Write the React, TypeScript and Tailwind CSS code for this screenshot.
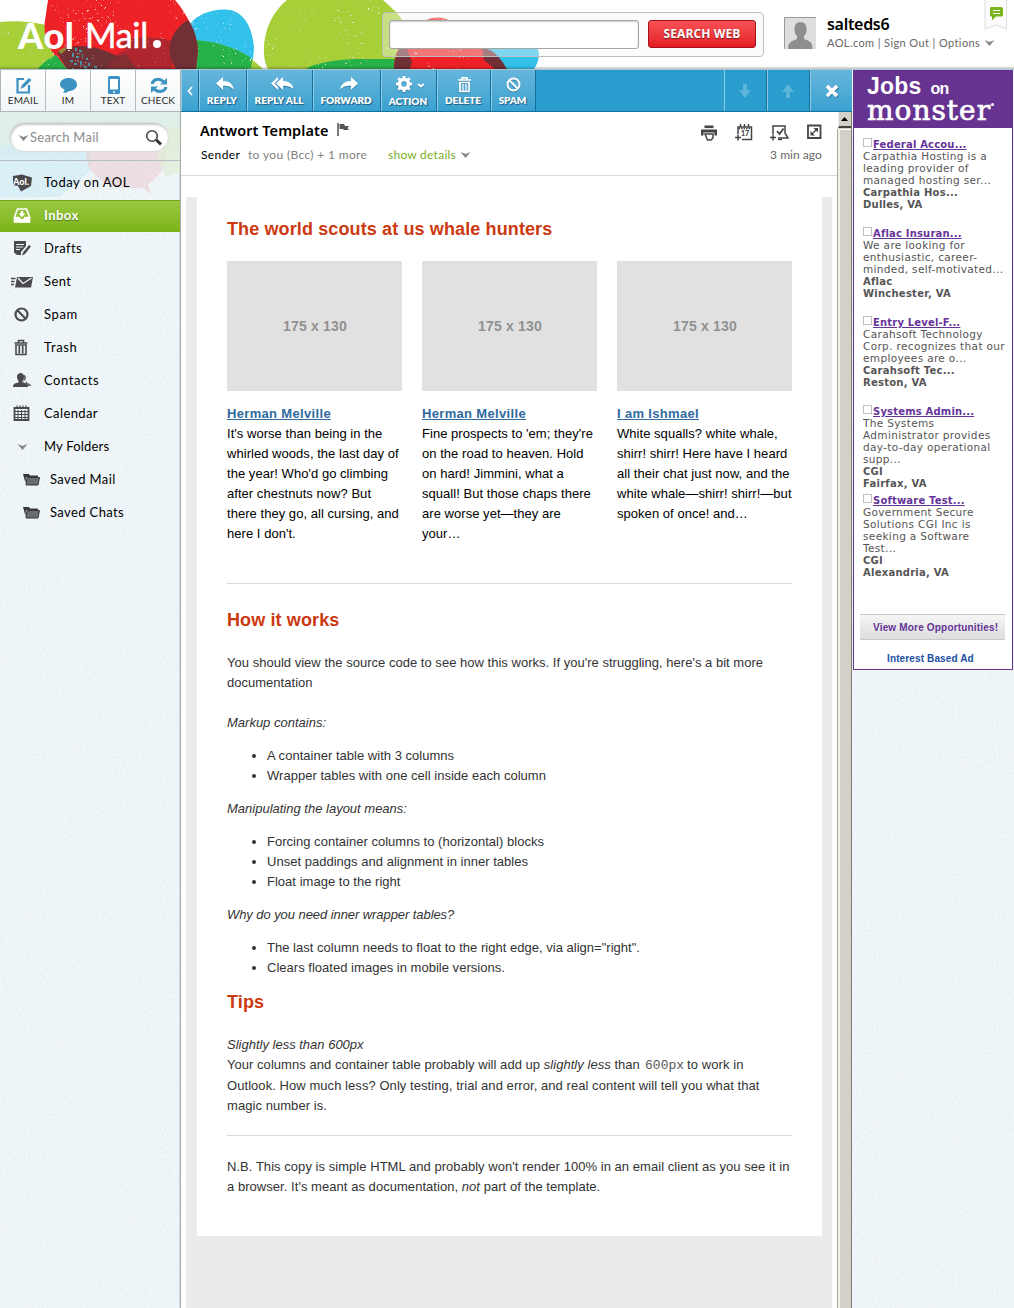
import React from 'react';
import type { ReactNode } from 'react';

const LATO = 'font-[Lato,sans-serif]';

function Blobs() {
  return (
    <svg className="absolute left-0 top-0" width="600" height="69" viewBox="0 0 600 69">
      <defs>
        <filter id="speckle" x="0" y="0" width="100%" height="100%">
          <feTurbulence type="fractalNoise" baseFrequency="0.4" numOctaves="3" seed="7" result="fine" />
          <feColorMatrix in="fine" type="matrix" values="0 0 0 0 1  0 0 0 0 1  0 0 0 0 1  7 0 0 0 -4.9" result="dots" />
          <feTurbulence type="fractalNoise" baseFrequency="0.03" numOctaves="2" seed="12" result="coarse" />
          <feColorMatrix in="coarse" type="matrix" values="0 0 0 0 1  0 0 0 0 1  0 0 0 0 1  6 0 0 0 -2.8" result="patches" />
          <feComposite in="dots" in2="patches" operator="in" result="clustered" />
          <feComposite in="clustered" in2="SourceAlpha" operator="in" result="d" />
          <feMerge>
            <feMergeNode in="SourceGraphic" />
            <feMergeNode in="d" />
          </feMerge>
        </filter>
      </defs>
      <g filter="url(#speckle)">
        <path d="M0 22C15 20 35 22 50 26L62 69H0Z" fill="#a9cf38" />
        <path d="M264 46C265 30 272 12 287 0H383C388 5 398 12 402 20L404 69H268Q263 60 264 46Z" fill="#a9cf38" />
        <path d="M305 69C315 63 335 60 352 59H398L404 69Z" fill="#27b24a" />
        <path d="M190 24C198 14 210 10 224 9.500C240 9 252 22 254 48L252 69H190Z" fill="#33c1ea" />
        <path d="M180 41C205 38 235 46 253 60L263 69H180Z" fill="#a9cf38" />
        <path d="M180 41C205 38 235 46 252 59L251 69H180Z" fill="#27b24a" />
        <path d="M48 0H175C188 15 197 35 198 50L196 69H67C52 55 44 42 44.500 24Z" fill="#ee2027" />
        <path d="M38 69C43 62 50 58 56 55L67 69Z" fill="#27b24a" />
        <path d="M120 42C135 36 155 36 172 41L172 69H103C108 60 116 53 126 50Z" fill="#b0282f" />
        <path d="M57 52C70 44 88 45 103 50C118 55 126 62 131 69H67Z" fill="#703036" />
        <path d="M105 69C112 58 120 55 126 54L137 69Z" fill="#852d33" />
      </g>
      <g>
        <path d="M188 20C174 28 168 42 170 54Q171 62 176 69H196L198 50C197 38 194 28 188 20Z" fill="#703036" />
        <path d="M484 50C490 40 500 32 514 30C530 32 538 43 539 55Q538 64 534 69H500Z" fill="#33c1ea" />
      </g>
      <g filter="url(#speckle)">
        <path d="M394 69C394 45 412 23 432 18C447 15 462 25 483 48L506 69Z" fill="#ee2027" />
      </g>
      <path d="M394 69C394 60 397 50 404 42L412 62L410 69Z" fill="#703036" />
      <path d="M482 47L492 51Q500 57 507 69H495L484 60Z" fill="#703036" />
      <path d="M58 51L63 48L66 47L66 50L61 54Z" fill="#968a35" />
      <path d="M75 48h2v3h-2zM79 50h3v2h-3zM72 53h2v4h-2zM76 56h3v2h-3zM70 60h3v2h-3zM82 54h1v3h-1zM86 58h2v2h-2zM74 63h3v2h-3zM88 63h2v3h-2zM80 61h2v4h-2zM94 66h3v2h-3zM84 66h3v2h-3z" fill="#3eb1cf" opacity=".75" />
    </svg>
  );
}

function Grain({ id, className }: { id: string; className: string }) {
  return (
    <svg className={className} width="100%" height="100%">
      <filter id={id} x="0" y="0" width="100%" height="100%">
        <feTurbulence type="fractalNoise" baseFrequency="0.45" numOctaves="2" seed="3" />
        <feColorMatrix type="matrix" values="0 0 0 0 .35  0 0 0 0 .5  0 0 0 0 .58  .22 0 0 0 -.085" />
      </filter>
      <rect width="100%" height="100%" filter={`url(#${id})`} />
    </svg>
  );
}

function Chevron({ className = '' }: { className?: string }) {
  return (
    <svg className={className} width="11" height="8" viewBox="0 0 11 8">
      <path d="M.5 1L5.500 3L10.500 1L5.500 7Z" fill="#858585" />
    </svg>
  );
}

const replyPath = 'M0 6.500L7 0V4C13 4 17 7 18 13C15 9.500 12 8.700 7 8.800V13Z';

function Header() {
  return (
    <header className="relative h-[70px] shrink-0 overflow-hidden border-b border-[#a9c6d2] bg-white">
      <Blobs />
      <div className="absolute inset-x-0 bottom-0 h-[3px] bg-gradient-to-b from-transparent to-black/25" />
      <div className={`relative flex h-[69px] items-start ${LATO}`}>
        <div className="flex w-[382px] items-start pl-[18px] pt-[15px] text-[34px] leading-10 text-white">
          <span className="w-[67px] text-[36px] font-black tracking-[0.6px]">Aol</span>
          <span className="w-[68px] tracking-[-0.3px] [-webkit-text-stroke:0.5px_white]">Mail</span>
          <span className="mt-[25px] size-[8px] rounded-full bg-white" />
        </div>
        <div className="mt-[12px] flex h-[45px] w-[382px] items-start rounded-[4px] border border-[#bdbdbd] bg-[#f4f4f4]/40 pl-[6px] pt-[7px]">
          <div className="h-[29px] w-[250px] rounded-[3px] border border-[#a5a5a5] bg-white shadow-[inset_0_1px_2px_rgba(0,0,0,0.2)]" />
          <button className='ml-[9px] h-[28px] w-[108px] whitespace-nowrap rounded-[3px] border border-[#a3121b] bg-gradient-to-b from-[#f65055] to-[#e51b24] font-["Open_Sans",sans-serif] text-[12px] font-bold leading-[26px] tracking-[0.1px] text-white [text-shadow:0_1px_1px_rgba(0,0,0,0.5)]'>
            SEARCH WEB
          </button>
        </div>
        <svg className="ml-[20px] mt-[17px]" width="32" height="32" viewBox="0 0 32 32">
          <path d="M0 0H32V32H0Z" fill="#dedede" />
          <path d="M.5 32V.5H32" fill="none" stroke="#999" />
          <path d="M4 32C4 25 8 24 13 22V19Q10 16 10.500 11Q11 5 16.500 5Q22 5 22.500 11Q23 16 20 19V22C26 24 28.500 25 28.500 32Z" fill="#8e8e8e" />
        </svg>
        <div className="ml-[11px] pt-[14px]">
          <div className='font-["Noto_Sans",sans-serif] text-[16px] font-semibold leading-5 tracking-[-0.3px] text-black'>salteds6</div>
          <div className="flex items-center gap-[4px] whitespace-nowrap pt-px text-[11px] leading-4 tracking-[0.4px] text-[#666]">
            AOL.com | Sign Out | Options <Chevron />
          </div>
        </div>
      </div>
      <svg className="absolute left-[984px] top-0" width="24" height="31" viewBox="0 0 24 31">
        <path d="M1 0V29L12 25L22.500 29V0" fill="#fcfcfc" stroke="#ddd" />
        <path d="M7 7H17Q19 7 19 9V15Q19 16.500 17 16.500H12L8 20.500V16.500H7Q6 16.500 6 15V9Q6 7 7 7Z" fill="#7ab51d" />
        <path d="M9 10.500H16M9 13.500H16" stroke="#fff" />
      </svg>
    </header>
  );
}

const quick: [string, ReactNode][] = [
  ['EMAIL', <g key="e" fill="none" stroke="#3c93c2" strokeWidth="2.200"><path d="M9 3H2.500V16.500H14V9" /><path d="M5.500 13L7 9L14 2L16.500 4L9.500 11Z" fill="#3c93c2" stroke="none" /></g>],
  ['IM', <path key="i" d="M8.500 2C13 2 17 4.500 17 8.500S13 15 9 15C7 17 4 17 3 16.500Q4.500 15.500 4.500 13.500C2 12.500 0 10.500 0 8.500C0 4.500 4 2 8.500 2Z" fill="#3c93c2" />],
  ['TEXT', <g key="t"><rect x="3" y="0" width="12" height="18" rx="1.500" fill="#3c93c2" /><path d="M5 3H13V13.500H5Z" fill="#fff" /><circle cx="9" cy="16" r="1" fill="#fff" /></g>],
  ['CHECK', <g key="c" fill="none" stroke="#3c93c2" strokeWidth="3"><path d="M2 8C3 3.500 9 1.500 13.500 5.500" /><path d="M16 11C15 15.500 9 17 4.500 13.500" /><path d="M10 8.500H17V2Z" fill="#3c93c2" stroke="none" /><path d="M8 10.500H1V17Z" fill="#3c93c2" stroke="none" /></g>],
];

const ink = '#4a4a4c';
const trash = (
  <g fill="none" stroke={ink} strokeWidth="1.600"><path d="M2.500 4H15.500M6.500 3.500V1.500H11.500V3.500M4 6.500V15.500H14V6.500" /><path d="M3 6H15M7.300 7V14.500M10.700 7V14.500" strokeWidth="1.700" /></g>
);
const nav: [string, ReactNode][] = [
  ['Today on AOL', <g key="a"><path d="M1 2L10 0.500L20 3.500L19 12L9 17.500L6 12L1 11Z" fill={ink} /><text x="1" y="10.500" fontSize="9" fontWeight="900" fill="#fff">Aol.</text></g>],
  ['Inbox', <g key="b" fill="none" stroke="#fff" strokeWidth="1.700"><path d="M2.500 10L5.500 2H14.500L17.500 10V15H2.500Z" /><path d="M3 10.500H7L8 12.500H12L13 10.500H17V14.500H3Z" fill="#fff" /><path d="M10 4V7.500" strokeWidth="2.500" /><path d="M6.500 6.500H13.500L10 10.300Z" fill="#fff" stroke="none" /></g>],
  ['Drafts', <g key="d"><path d="M2 1H14V6L9 12V15H5L2 12.500Z" fill={ink} /><path d="M4 4.500H12M4 7H11M4 9.500H8" stroke="#eff5f8" /><path d="M10 15.500L11 12.500L17 5L19 6.500L13 14Z" fill={ink} /></g>],
  ['Sent', <g key="s"><path d="M6 4H22L20 14.500H4Z" fill={ink} /><path d="M7 5L12 10.500L20.500 5" fill="none" stroke="#eff5f8" strokeWidth="1.300" /><path d="M0 5.500H4.500M0 8.500H3.500M0 11.500H3" stroke={ink} strokeWidth="1.400" /></g>],
  ['Spam', <g key="p" fill="none" stroke={ink} strokeWidth="2.200"><circle cx="9.500" cy="8.500" r="6" /><path d="M5.500 4.500L13.500 12.500" /></g>],
  ['Trash', trash],
  ['Contacts', <g key="c"><path d="M12 12V9Q14 8 14 5Q13.500 2.500 11.500 2.500V14H19V13Q17 11 15 11V9Z" fill="#68686b" /><path d="M1 15V13.500Q2 11 6.500 10.500V9Q5 7.500 5 4.500Q5.500 1 8.500 1T12 4.500Q12 7.500 10.500 9V10.500Q16 11.500 16 15Z" fill={ink} /></g>],
  ['Calendar', <g key="k" fill="none" stroke={ink}><path d="M2.500 3H16.500V15H2.500Z" strokeWidth="1.800" /><path d="M2 6.500H16M2 9.500H16M2 12.500H16M6 5V15M9.500 5V15M13 5V15" /><path d="M5 .5V4M8 .5V4M11 .5V4M14 .5V4" strokeWidth="1.200" /></g>],
];

const navTrack = ['tracking-[0.5px]', 'tracking-[0.45px]', 'tracking-[0.4px]', 'tracking-[0.4px]', 'tracking-[0.6px]', 'tracking-[0.65px]', 'tracking-[0.55px]', 'tracking-[0.4px]'];

function Sidebar() {
  return (
    <aside className={`relative w-[181px] shrink-0 overflow-hidden border-r border-[#a9abac] bg-[#f0f6f9] shadow-[inset_-1px_0_0_#d5dadc] ${LATO} text-black`}>
      <svg className="absolute left-0 top-[42px]" width="180" height="90">
        <path d="M0 0H180V40H100L0 45Z" fill="#dceee3" opacity=".75" />
        <path d="M0 35Q40 20 90 40V60L60 85H0Z" fill="#d4edf6" opacity=".75" />
        <path d="M86 40Q95 10 140 15Q172 25 166 50Q160 65 148 72L151 83L143 76Q110 78 97 65Q85 55 86 40Z" fill="#eac4c8" opacity=".45" />
        <path d="M150 15H180V60L165 65Z" fill="#e2f0d5" opacity=".7" />
      </svg>
      <Grain id="side-grain" className="absolute inset-0" />
      <div className="relative">
        <div className="flex h-[42px] border-b border-l border-[#b1b4b6] bg-gradient-to-b from-white to-[#f1f5f6]">
          {quick.map(([label, icon]) => (
            <div key={label} className="flex w-[45px] shrink-0 flex-col items-center border-r border-[#b8bbbd] pt-[6px]">
              <svg className="ml-px" width="18" height="18">{icon}</svg>
              <span className="text-[10px] leading-[13px] tracking-[0.15px] text-[#2b2b2b]">{label}</span>
            </div>
          ))}
        </div>
        <div className="h-[49px] border-b border-[#b5bdc0] px-[9px] pt-[10px]">
          <div className="flex h-[30px] w-[160px] items-center rounded-full border border-[#d5dcdf] bg-white pl-[8px] pt-px shadow-[inset_1px_2px_2px_rgba(0,0,0,0.22)]">
            <Chevron />
            <span className="ml-px text-[13px] tracking-[0.25px] text-[#8b8b8b]">Search Mail</span>
            <svg className="ml-auto mr-[5px]" width="18" height="18" viewBox="0 0 18 18"><circle cx="7" cy="7" r="5.300" fill="none" stroke="#444" strokeWidth="1.600" /><path d="M11.300 11L16 15.300" stroke="#333" strokeWidth="3" /></svg>
          </div>
        </div>
        <nav className="pt-[6px] text-[13px]">
          {nav.map(([label, icon], i) => (
            <div key={label} className="flex h-[33px] items-start">
              <div className={label === 'Inbox' ? 'flex h-[32px] flex-1 items-center border-t border-[#72a31c] bg-gradient-to-b from-[#9ac83f] to-[#7ab317] pb-px font-bold text-white [text-shadow:0_1px_1px_rgba(0,0,0,0.4)]' : 'flex h-[31px] flex-1 items-center'}>
                <svg className={label === 'Sent' ? 'ml-[11px]' : 'ml-[12px]'} width="23" height="18">{icon}</svg>
                <span className={`${label === 'Sent' ? 'ml-[10px]' : 'ml-[9px]'} ${navTrack[i]}`}>{label}</span>
              </div>
            </div>
          ))}
          <div className="flex h-[33px] items-center pb-[2px] pl-[17px]">
            <Chevron />
            <span className="ml-[16px] tracking-[0.2px]">My Folders</span>
          </div>
          {['Saved Mail', 'Saved Chats'].map((label) => (
            <div key={label} className="flex h-[33px] items-center pb-[2px] pl-[23px]">
              <svg width="18" height="14" viewBox="0 0 18 14"><path d="M0 1H6L7 2.500H15V4H3L2.500 10Z" fill="#38383a" /><path d="M4 4.500H16.500L15 12H3Z" fill="#6a6c6f" stroke="#38383a" /></svg>
              <span className="ml-[9px] tracking-[0.38px]">{label}</span>
            </div>
          ))}
        </nav>
      </div>
    </aside>
  );
}

const actions: [string, string, number, string, ReactNode][] = [
  ['REPLY', 'w-[48px] tracking-[0.15px]', 18, 'ml-[3px]', <path key="r" d={replyPath} />],
  ['REPLY ALL', 'w-[66px] tracking-[0px]', 22, 'ml-[3px]', <g key="ra"><path d={replyPath} transform="translate(5)" /><path d="M7 0V3L3.500 6.500L7 10V13L0 6.500Z" /></g>],
  ['FORWARD', 'w-[68px] tracking-[-0.05px]', 18, 'ml-[3px]', <path key="f" d={replyPath} transform="matrix(-1 0 0 1 18 0)" />],
  ['ACTION', 'w-[56px] tracking-[0px]', 29, 'ml-[2px]', <g key="a"><circle cx="8" cy="8" r="4.500" fill="none" stroke="#fff" strokeWidth="3.600" /><path d="M8 0V3M8 13V16M0 8H3M13 8H16M2.400 2.400L4.500 4.500M11.500 11.500L13.600 13.600M13.600 2.400L11.500 4.500M2.400 13.600L4.500 11.500" stroke="#fff" strokeWidth="3" /><path d="M22 8L25 10.500L28 8" fill="none" stroke="#fff" strokeWidth="1.800" /></g>],
  ['DELETE', 'w-[54px] tracking-[0px]', 13, '', <g key="d" fill="none" stroke="#fff" strokeWidth="1.700"><path d="M0 3H13M4 2.500V.8H9V2.500M2 6V14.500H11V6" /><path d="M1 5.500H12M5 7V14M8 7V14" strokeWidth="1.300" /></g>],
  ['SPAM', 'w-[45px] tracking-[-0.1px]', 15, '', <g key="s" fill="none" stroke="#fff" strokeWidth="2"><circle cx="7.500" cy="7.500" r="6" /><path d="M3.500 3.500L11.500 11.500" /></g>],
];

const cell = 'flex shrink-0 border-l border-r border-l-[#8ecbe6] border-r-[#14719c]';
const lit = 'bg-gradient-to-b from-[#66b6dc] to-[#38a1d0]';

function Toolbar() {
  return (
    <div className={`relative flex h-[42px] shrink-0 border-b border-[#11739f] bg-[#2a9ccd] ${LATO}`}>
      <div className={`${cell} ${lit} w-[18px] items-center justify-center`}>
        <svg width="6" height="10"><path d="M5 1L1.500 5L5 9" fill="none" stroke="#fff" strokeWidth="1.700" /></svg>
      </div>
      {actions.map(([label, w, iw, shift, icon]) => (
        <div key={label} className={`${cell} ${lit} ${w} flex-col items-center whitespace-nowrap text-[10px] font-extrabold text-white`}>
          <svg className={`${shift} drop-shadow-[0_1px_0_rgba(0,60,90,0.4)] ${label === 'ACTION' ? 'mt-[6px]' : 'mt-[7px]'}`} width={iw} height="16" fill="#fff">{icon}</svg>
          <span className={`-ml-[2px] leading-[13px] [text-shadow:1px_1px_1px_rgba(0,40,70,0.6)] ${label === 'ACTION' ? 'mt-[3px]' : 'mt-px'}`}>{label}</span>
        </div>
      ))}
      <div className="flex-1" />
      <div className={`${cell} w-[43px] items-center justify-center`}>
        <svg className="-ml-px" width="14" height="14" fill="#5db4da"><path d="M5 0H9V6H13L7 14L1 6H5Z" /></svg>
      </div>
      <div className={`${cell} w-[43px] items-center justify-center`}>
        <svg className="-ml-[2px]" width="14" height="14" fill="#5db4da"><path d="M5 14H9V8H13L7 0L1 8H5Z" /></svg>
      </div>
      <div className={`${lit} flex w-[42px] items-center justify-center border-l border-[#8ecbe6]`}>
        <svg className="drop-shadow-[1px_1px_0_rgba(0,60,90,0.4)]" width="14" height="14"><path d="M2 2L12 12M12 2L2 12" stroke="#fff" strokeWidth="3.700" /></svg>
      </div>
    </div>
  );
}

function MessageHead() {
  return (
    <div className={`flex h-[64px] shrink-0 border-b border-[#d9d9d9] ${LATO}`}>
      <div className="pl-[19px] pt-[8px]">
        <div className="flex items-center gap-[9px]">
          <h1 className='font-["Noto_Sans",sans-serif] text-[14.500px] font-semibold leading-5 tracking-[0.06px] text-black'>Antwort Template</h1>
          <svg className="-mt-px" width="12" height="13"><path d="M1 0V13" stroke="#333" strokeWidth="1.300" /><path d="M2.500 1H7L8 3H12L10.500 5L12 7H7L6 6H2.500Z" fill="#555" /></svg>
        </div>
        <div className="flex items-center whitespace-nowrap pt-[7px] text-[12px] leading-4">
          <span className="ml-px w-[47px] tracking-[0.4px] text-black">Sender</span>
          <span className="w-[140px] tracking-[0.35px] text-[#808080]">to you (Bcc) + 1 more</span>
          <span className="mr-[4px] tracking-[0.25px] text-[#7ab01c]">show details</span>
          <Chevron />
        </div>
      </div>
      <div className="ml-auto w-[138px] pt-[12px]">
        <div className="flex h-[18px] text-[#444]">
          <svg width="18" height="18"><path d="M4.500 2.800H13.500" stroke="#444" strokeWidth="2.600" /><path d="M1 5.500H17V11.500H14.500V8.500H3.500V11.500H1Z" fill="#444" /><path d="M5 10H13V14L11 16H7.500Z" fill="#fff" stroke="#444" strokeWidth="1.500" /></svg>
          <svg className="ml-[17px]" width="18" height="18" fill="none" stroke="currentColor" strokeWidth="1.500"><path d="M3 10V3H16.500V15.500H7" /><path d="M3.500 4.500H16" strokeDasharray="1.500 1" /><path d="M5.500 0V3M9.500 0V3M13.500 0V3M0 13.500H6M3 10.500V16.500" /><text x="6" y="12" fontSize="7" fontWeight="900" fill="#444" stroke="none">17</text></svg>
          <svg className="ml-[17px]" width="19" height="18" fill="none" stroke="currentColor" strokeWidth="1.500"><path d="M3 10V2H15V9L18 14H8" /><path d="M7 7L9.500 10L13.500 4.500" strokeWidth="1.800" /><path d="M0 13.500H6M3 10.500V16.500M8 15.500H12" /></svg>
          <svg className="ml-[18px]" width="15" height="15" fill="none" stroke="currentColor" strokeWidth="1.800"><path d="M1 1.500H13.500V14H1Z" /><path d="M4.500 10.500L10 5" strokeWidth="1.300" /><path d="M6.500 4H11V8.500ZM3.500 7V11.500H8Z" fill="#444" stroke="none" /></svg>
        </div>
        <div className="mt-[5px] pl-[70px] text-[12px] leading-4 tracking-[0.05px] text-[#666]">3 min ago</div>
      </div>
    </div>
  );
}

const articles: [string, string[]][] = [
  ['Herman Melville', ["It's worse than being in the", 'whirled woods, the last day of', "the year! Who'd go climbing", 'after chestnuts now? But', 'there they go, all cursing, and', "here I don't."]],
  ['Herman Melville', ["Fine prospects to 'em; they're", 'on the road to heaven. Hold', 'on hard! Jimmini, what a', 'squall! But those chaps there', 'are worse yet—they are', 'your…']],
  ['I am Ishmael', ['White squalls? white whale,', 'shirr! shirr! Here have I heard', 'all their chat just now, and the', 'white whale—shirr! shirr!—but', 'spoken of once! and…']],
];

const H2 = 'text-[18px] font-bold leading-5 tracking-[0.12px] text-[#cc3911]';

function Bullets({ items }: { items: string[] }) {
  return (
    <ul className="my-[13px] list-disc pl-[40px] tracking-[0.02px]">
      {items.map((t) => <li key={t}>{t}</li>)}
    </ul>
  );
}

function Email() {
  return (
    <div className="flex-1 pl-[5px] pr-[6px] pt-[21px]">
      <div className="h-full bg-[#ebebeb] pl-[11px]">
        <article className='h-[1039px] w-[625px] whitespace-nowrap bg-white px-[30px] pt-[22px] font-["Liberation_Sans",Arial,sans-serif] text-[13px] leading-5 text-[#333]'>
          <h2 className={H2}>The world scouts at us whale hunters</h2>
          <div className="mt-[22px] flex gap-[20px] tracking-[0.04px] text-black">
            {articles.map(([title, lines], i) => (
              <section key={i} className="w-[175px]">
                <div className="flex h-[130px] items-center justify-center bg-[#e1e1e1] pl-px text-[14px] font-bold tracking-[0.2px] text-[#919191]">175 x 130</div>
                <h3 className="mt-[13px] font-bold tracking-[0.33px] text-[#2f6a9e] underline">{title}</h3>
                {lines.map((l) => <p key={l}>{l}</p>)}
              </section>
            ))}
          </div>
          <hr className="mt-[39px] border-[#d9d9d9]" />
          <h2 className={`mt-[26px] ${H2}`}>How it works</h2>
          <p className="mt-[23px] tracking-[0.02px]">You should view the source code to see how this works. If you're struggling, here's a bit more<br />documentation</p>
          <p className="mt-[20px] italic">Markup contains:</p>
          <Bullets items={['A container table with 3 columns', 'Wrapper tables with one cell inside each column']} />
          <p className="italic">Manipulating the layout means:</p>
          <Bullets items={['Forcing container columns to (horizontal) blocks', 'Unset paddings and alignment in inner tables', 'Float image to the right']} />
          <p className="italic tracking-[-0.07px]">Why do you need inner wrapper tables?</p>
          <Bullets items={['The last column needs to float to the right edge, via align="right".', 'Clears floated images in mobile versions.']} />
          <h2 className={`mt-[14px] ${H2}`}>Tips</h2>
          <p className="mt-[23px] italic">Slightly less than 600px</p>
          <p className="flex h-[20px] tracking-[0.04px]">
            <span className="w-[417px] whitespace-pre">Your columns and container table probably will add up <i>slightly less</i> than </span>
            <code className='w-[43px] pl-px pt-px font-["Liberation_Mono",monospace] text-[13px] text-[#555]'>600px</code>
            <span className="tracking-[0.1px]">to work in</span>
          </p>
          <p className="pt-px tracking-[0.06px]">Outlook. How much less? Only testing, trial and error, and real content will tell you what that<br />magic number is.</p>
          <hr className="mt-[19px] border-[#d9d9d9]" />
          <p className="mt-[21px] tracking-[0.045px]">N.B. This copy is simple HTML and probably won't render 100% in an email client as you see it in<br />a browser. It's meant as documentation, <i>not</i> part of the template.</p>
        </article>
      </div>
    </div>
  );
}

function Scrollbar() {
  return (
    <div className="flex w-[14px] shrink-0 flex-col border-r border-[#7d7a74] bg-[#d4d0c8]">
      <div className="flex h-[16px] items-center justify-center border-b-2 border-l border-b-[#47443f] border-l-[#eee]">
        <svg width="8" height="4"><path d="M0 4L3.500 0L7 4Z" fill="#000" /></svg>
      </div>
      <div className="mt-px flex-1 border-l-2 border-t border-l-[#f1efea] border-t-white shadow-[-1px_0_0_#a8a59f]" />
    </div>
  );
}

const jobs: [string, string[], string, string][] = [
  ['Federal Accou...', ['Carpathia Hosting is a', 'leading provider of', 'managed hosting ser...'], 'Carpathia Hos...', 'Dulles, VA'],
  ['Aflac Insuran...', ['We are looking for', 'enthusiastic, career-', 'minded, self-motivated...'], 'Aflac', 'Winchester, VA'],
  ['Entry Level-F...', ['Carahsoft Technology', 'Corp. recognizes that our', 'employees are o...'], 'Carahsoft Tec...', 'Reston, VA'],
  ['Systems Admin...', ['The Systems', 'Administrator provides', 'day-to-day operational', 'supp...'], 'CGI', 'Fairfax, VA'],
  ['Software Test...', ['Government Secure', 'Solutions CGI Inc is', 'seeking a Software', 'Test...'], 'CGI', 'Alexandria, VA'],
];

function Ad() {
  return (
    <aside className='relative h-[600px] w-[160px] border border-[#663391] bg-white font-["DejaVu_Sans",Verdana,sans-serif] text-[#555]'>
      <div className="h-[57px] bg-[#663391] pl-[13px] text-white">
        <div className='flex h-[24px] items-baseline gap-[9px] pt-[2px] font-["Liberation_Sans",sans-serif] font-bold leading-[26px]'>
          <span className="text-[23px] tracking-[0.2px]">Jobs</span>
          <span className="text-[16px] tracking-[-0.8px]">on</span>
        </div>
        <div className='flex font-["DejaVu_Serif",serif] text-[28px] leading-[32px] tracking-[1px] [-webkit-text-stroke:0.7px_white]'>
          monster<span className="mt-[8px] size-[3px] rounded-full bg-white" />
        </div>
      </div>
      <div className="h-[486px] whitespace-nowrap pl-[9px] pt-[10px] text-[10.500px] leading-[12px] tracking-[0.35px]">
        {jobs.map(([title, lines, company, place]) => (
          <div key={title} className="h-[89px]">
            <div className="flex h-[12px] text-[10px]">
              <span className="mr-px size-[9px] border border-[#c0c0c0]" />
              <a className="pt-px font-bold tracking-[0.18px] text-[#663399] underline">{title}</a>
            </div>
            {lines.map((l) => <div key={l}>{l}</div>)}
            <div className="pt-px text-[10px] font-bold tracking-[0.25px]">
              <div>{company}</div>
              <div>{place}</div>
            </div>
          </div>
        ))}
      </div>
      <div className='mx-[6px] h-[26px] w-[145px] whitespace-nowrap border-b border-t border-[#cacaca] bg-gradient-to-b from-[#f6f6f6] to-[#dcdddd] pl-[13px] font-["Liberation_Sans",sans-serif] text-[10px] font-bold leading-[25px] tracking-[0.18px] text-[#663399]'>
        View More Opportunities!
      </div>
      <div className='mt-[12px] pl-[33px] font-["Liberation_Sans",sans-serif] text-[10px] font-bold leading-[14px] tracking-[0.13px] text-[#1a4fa3]'>Interest Based Ad</div>
    </aside>
  );
}

export default function App() {
  return (
    <div className="flex h-[1308px] w-[1014px] flex-col overflow-hidden bg-white">
      <Header />
      <div className="flex min-h-0 flex-1">
        <Sidebar />
        <main className="flex w-[671px] shrink-0 flex-col bg-white">
          <Toolbar />
          <div className="flex min-h-0 flex-1">
            <div className="flex w-[657px] shrink-0 flex-col">
              <MessageHead />
              <Email />
            </div>
            <Scrollbar />
          </div>
        </main>
        <div className="relative flex-1 bg-[#f0f6f9] pl-px">
          <Grain id="ad-grain" className="absolute inset-0" />
          <Ad />
        </div>
      </div>
    </div>
  );
}
